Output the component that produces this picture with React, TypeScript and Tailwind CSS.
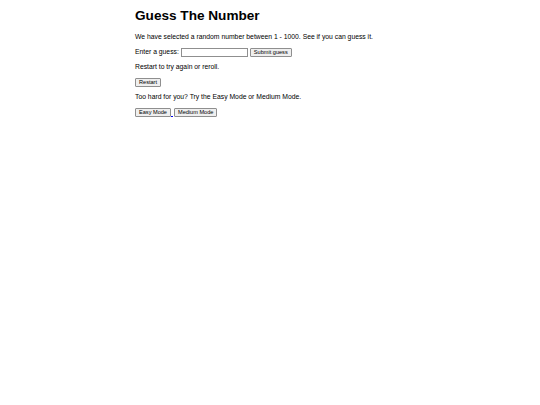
import React from "react";

const btn =
  "h-[9px] px-[3px] bg-[#efefef] border border-[#8f8f8f] rounded-[1px] text-[5.6px] leading-[7px] text-black flex items-center";

export default function App() {
  return (
    <div className="w-[540px] h-[405px] bg-white" style={{ fontFamily: '"Liberation Sans", Arial, sans-serif' }}>
      <div className="ml-[135px] w-[270px] pt-[7px] flex flex-col text-black">
        <h1 className="text-[13.6px] leading-[17px] font-bold">Guess The Number</h1>
        <div className="mt-[8px] flex flex-col gap-[5px] text-[6.8px]">
          <p className="h-[10px] leading-[10px]">
            We have selected a random number between 1 - 1000. See if you can guess it.
          </p>
          <div className="h-[10px] flex items-center">
            <span className="leading-[10px]">Enter a guess:</span>
            <span className="ml-[2px] w-[67px] h-[9px] border border-[#8f8f8f] bg-white" />
            <span className={"ml-[2px] " + btn}>Submit guess</span>
          </div>
          <p className="h-[10px] leading-[10px]">Restart to try again or reroll.</p>
          <div className="h-[10px] flex items-center">
            <span className={btn}>Restart</span>
          </div>
          <p className="h-[10px] leading-[10px]">Too hard for you? Try the Easy Mode or Medium Mode.</p>
          <div className="h-[10px] flex items-center">
            <span className={btn}>Easy Mode</span>
            <span className="w-[2px] h-[9px] border-b border-[#0000ee] self-end" />
            <span className={"ml-[1px] " + btn}>Medium Mode</span>
          </div>
        </div>
      </div>
    </div>
  );
}
